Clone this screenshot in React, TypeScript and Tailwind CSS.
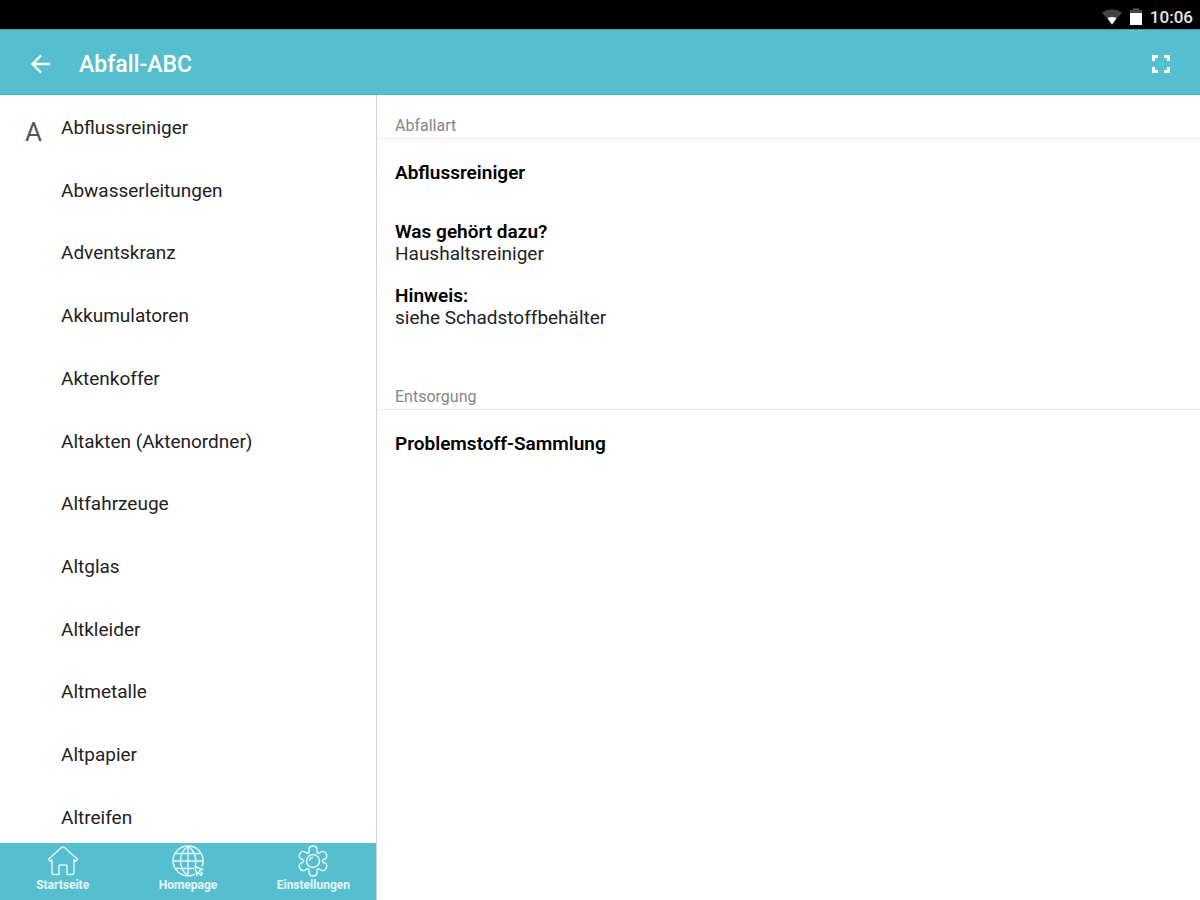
import React, { useState } from 'react';

const entries = [
  'Abflussreiniger',
  'Abwasserleitungen',
  'Adventskranz',
  'Akkumulatoren',
  'Aktenkoffer',
  'Altakten (Aktenordner)',
  'Altfahrzeuge',
  'Altglas',
  'Altkleider',
  'Altmetalle',
  'Altpapier',
  'Altreifen',
];

const HomeIcon = () => (
  <svg viewBox="0 0 32 32" className="w-8 h-8" fill="none" stroke="currentColor" strokeWidth="1.4" strokeLinejoin="round" aria-hidden="true">
    <path d="M1.500 14.300 14.800 2.300q1.200-1 2.400 0l13.300 12-1.700 2-1.800-1.600V28q0 1.500-1.500 1.500H20V21q0-1-1-1h-6q-1 0-1 1v8.500H6.500Q5 29.500 5 28V14.700l-1.800 1.600z" />
  </svg>
);

const GlobeIcon = () => (
  <svg viewBox="0 0 32 32" className="w-8 h-8" fill="none" stroke="currentColor" strokeWidth="1.400" aria-hidden="true">
    <path d="M23 29.200A15 15 0 1 1 30 21.500" />
    <path d="M16 1v30M1 16h30M3.500 8.500h25M3.500 23.500H22" />
    <path d="M16 1C6 9 6 23 16 31M16 1c6.500 5 9 12 7.500 20" />
    <path d="m23 21.500 7.500 3-3 1.300 3 3-1.500 1.500-3-3-1.200 2.700z" />
  </svg>
);

// Six round teeth around a double ring
const GearIcon = () => (
  <svg viewBox="0 0 32 32" className="w-8 h-8" fill="none" stroke="currentColor" strokeWidth="1.400" strokeLinejoin="round" aria-hidden="true">
    <path d="M12 7.500V4.500Q12 1 16 1t4 3.500v3l1.500.900 2.600-1.500q3.200-1.600 5 1.800t-1 5.100L25.500 15.200v1.600l2.600 1.400q2.800 1.700 1 5.100t-5 1.800l-2.600-1.500-1.500.900v3Q20 31 16 31t-4-3.500v-3l-1.500-.900-2.600 1.500q-3.200 1.600-5-1.800t1-5.100l2.600-1.400v-1.600l-2.600-1.400q-2.800-1.700-1-5.100t5-1.800l2.600 1.500z" />
    <circle cx="16" cy="16" r="6.500" />
    <path d="M12.500 16a3.500 3.500 0 0 1 3.500-3.500" />
  </svg>
);

const tabs = [
  { label: 'Startseite', icon: <HomeIcon /> },
  { label: 'Homepage', icon: <GlobeIcon /> },
  { label: 'Einstellungen', icon: <GearIcon /> },
];

const StatusBar = () => (
  <div className="bg-black h-[29px] shrink-0 flex items-center justify-end pr-[7px] pt-1 text-white">
    <svg viewBox="0 0 20 16" className="w-5 h-4" aria-hidden="true">
      <path d="M0 3.500Q10-3 20 3.500L10 16z" fill="#444" />
      <path d="M5.500 9Q10 7 14.500 9L10 15.500z" fill="#fff" />
    </svg>
    <svg viewBox="0 0 14 17" className="w-[14px] h-[17px] ml-[7px]" aria-hidden="true">
      <path d="M4 0h6v2h3v4H1V2h3z" fill="#444" />
      <path d="M1 5h12v12H1z" fill="#fff" />
    </svg>
    <span className="ml-[7px] text-[17px] leading-5 font-medium text-gray-200">10:06</span>
  </div>
);

const SectionTitle = ({ children }: { children: React.ReactNode }) => (
  <h2 className="px-[18px] border-b border-[#ececec] text-base leading-6 text-[#858585]">{children}</h2>
);

export default function App() {
  const [selected, setSelected] = useState(entries[0]);

  return (
    <div className="min-h-screen flex flex-col bg-white text-[#222]" style={{ fontFamily: 'Roboto, sans-serif' }}>
      <StatusBar />

      <header className="h-[66px] shrink-0 flex items-center bg-[#55bfd0] border-t border-b border-t-[#4597a3] border-b-[#45b3c6] pt-1 pl-[30px] pr-[29px] text-white">
        <button type="button" aria-label="Zurück">
          <svg viewBox="0 0 20 20" className="w-5 h-5" fill="none" stroke="currentColor" strokeWidth="2.300" aria-hidden="true">
            <path d="M20 10H3M11 1.500 2.500 10l8.500 8.500" />
          </svg>
        </button>
        <h1 className="ml-[29px] pt-[2px] flex-1 text-[23px] leading-8 font-medium">Abfall-ABC</h1>
        <button type="button" aria-label="Vollbild">
          <svg viewBox="0 0 20 20" className="w-5 h-5" fill="none" stroke="currentColor" strokeWidth="3" aria-hidden="true">
            <path d="M2.500 7V2.500H7M13 2.500h4.500V7M17.500 13v4.500H13M7 17.500H2.500V13" />
          </svg>
        </button>
      </header>

      <div className="flex-1 flex">
        <aside className="w-[377px] shrink-0 flex flex-col border-r border-[#d4d4d4]">
          <div className="flex-1 flex pl-[25px] pt-[21px] pb-[13px]">
            <span className="w-9 pt-1 text-[26px] leading-6 text-[#555]">A</span>
            <ul className="flex-1 flex flex-col justify-between gap-3">
              {entries.map((entry) => (
                <li key={entry} className="flex">
                  <button
                    type="button"
                    onClick={() => setSelected(entry)}
                    className="flex-1 text-left text-[19px] leading-6"
                  >
                    {entry}
                  </button>
                </li>
              ))}
            </ul>
          </div>
          <nav className="h-[57px] shrink-0 grid grid-cols-3 bg-[#55bfd0] text-[#e6f8fb]">
            {tabs.map((tab) => (
              <a key={tab.label} href="#" className="flex flex-col items-center pt-[2px]">
                {tab.icon}
                <span className="text-xs leading-4 font-bold">{tab.label}</span>
              </a>
            ))}
          </nav>
        </aside>

        <main className="flex-1 pt-[19px] text-[19px] leading-[22px]">
          <SectionTitle>Abfallart</SectionTitle>
          <div className="px-[18px] pt-[23px] pb-14">
            <p className="font-semibold text-black">{selected}</p>
            <p className="mt-[37px] font-semibold text-black">Was gehört dazu?</p>
            <p>Haushaltsreiniger</p>
            <p className="mt-5 font-semibold text-black">Hinweis:</p>
            <p>siehe Schadstoffbehälter</p>
          </div>
          <SectionTitle>Entsorgung</SectionTitle>
          <p className="px-[18px] pt-[23px] font-semibold text-black">Problemstoff-Sammlung</p>
        </main>
      </div>
    </div>
  );
}
